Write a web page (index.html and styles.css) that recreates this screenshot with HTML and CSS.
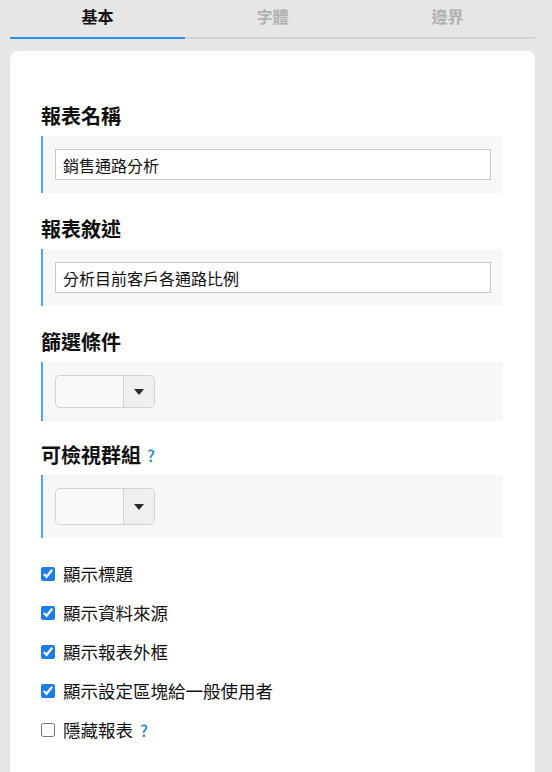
FILE: index.html
```html
<!DOCTYPE html>
<html lang="zh-Hant">
<head>
<meta charset="utf-8">
<title>報表設定</title>
<link rel="stylesheet" href="styles.css">
</head>
<body>
<div class="page">
  <div class="tabs">
    <div class="tab active">基本</div>
    <div class="tab">字體</div>
    <div class="tab">邊界</div>
  </div>
  <div class="card">
    <div class="field">
      <div class="label">報表名稱</div>
      <div class="box"><input class="text" type="text" value="銷售通路分析" readonly></div>
    </div>
    <div class="field">
      <div class="label">報表敘述</div>
      <div class="box"><input class="text" type="text" value="分析目前客戶各通路比例" readonly></div>
    </div>
    <div class="field">
      <div class="label">篩選條件</div>
      <div class="box"><div class="select"><span class="sel-val"></span><span class="sel-btn"><span class="caret"></span></span></div></div>
    </div>
    <div class="field tight">
      <div class="label">可檢視群組 <span class="help">?</span></div>
      <div class="box"><div class="select tall"><span class="sel-val"></span><span class="sel-btn"><span class="caret"></span></span></div></div>
    </div>
    <div class="checks">
      <label class="check"><input type="checkbox" checked><span>顯示標題</span></label>
      <label class="check"><input type="checkbox" checked><span>顯示資料來源</span></label>
      <label class="check"><input type="checkbox" checked><span>顯示報表外框</span></label>
      <label class="check"><input type="checkbox" checked><span>顯示設定區塊給一般使用者</span></label>
      <label class="check"><input type="checkbox"><span>隱藏報表</span><span class="help">?</span></label>
    </div>
  </div>
</div>
</body>
</html>
```

FILE: styles.css
```css
html, body {
  margin: 0;
  padding: 0;
  background: #e6e6e6;
  font-family: "Noto Sans CJK TC", "Noto Sans", sans-serif;
  color: #111;
}
.page {
  padding: 0 17px 0 10px;
  height: 772px;
  overflow: hidden;
  box-sizing: border-box;
}
.tabs {
  display: flex;
}
.tab {
  flex: 1;
  text-align: center;
  font-size: 16px;
  font-weight: bold;
  line-height: 20px;
  padding: 6px 0 11px;
  color: #b0b0b0;
  border-bottom: 2px solid #d4d4d4;
}
.tab.active {
  color: #111;
  border-bottom-color: #2a8ff2;
}
.card {
  margin-top: 12px;
  background: #fff;
  border-radius: 8px 8px 0 0;
  padding: 51px 32px 40px 31px;
  min-height: 700px;
}
.field + .field {
  margin-top: 22px;
}
.field.tight {
  margin-top: 20px;
}
.label {
  font-size: 20px;
  font-weight: bold;
  line-height: 28px;
  margin-bottom: 6px;
  display: flex;
  align-items: center;
}
.help {
  color: #2389d6;
  font-size: 16px;
  font-weight: 500;
  margin-left: 6px;
  line-height: 20px;
}
.box {
  background: #f7f7f7;
  border-left: 2px solid #4fa6f5;
  padding: 13px 12px;
}
.text {
  display: block;
  box-sizing: border-box;
  width: 100%;
  height: 31px;
  border: 1px solid #c8c8c8;
  background: #fff;
  padding: 0 7px;
  margin: 0;
  font-family: "Noto Sans CJK TC", sans-serif;
  font-size: 16px;
  color: #111;
  outline: none;
}
.select {
  display: flex;
  width: 100px;
  height: 33px;
  box-sizing: border-box;
  border: 1px solid #d2d2d2;
  border-radius: 5px;
  overflow: hidden;
  background: #f9f9f9;
}
.select.tall {
  height: 37px;
}
.sel-val {
  width: 67px;
  border-right: 1px solid #d2d2d2;
}
.sel-btn {
  flex: 1;
  background: #efefef;
  display: flex;
  align-items: center;
  justify-content: center;
}
.caret {
  width: 0;
  height: 0;
  border-left: 5px solid transparent;
  border-right: 5px solid transparent;
  border-top: 6px solid #2a2a2a;
}
.checks {
  margin-top: 24px;
  display: flex;
  flex-direction: column;
  gap: 15px;
}
.check {
  display: flex;
  align-items: center;
  height: 24px;
  font-size: 17.5px;
  line-height: 24px;
}
.check input {
  width: 14px;
  height: 14px;
  margin: 0 8px 0 0;
  accent-color: #1a7ee6;
}
.check .help {
  margin-left: 7px;
}
```
